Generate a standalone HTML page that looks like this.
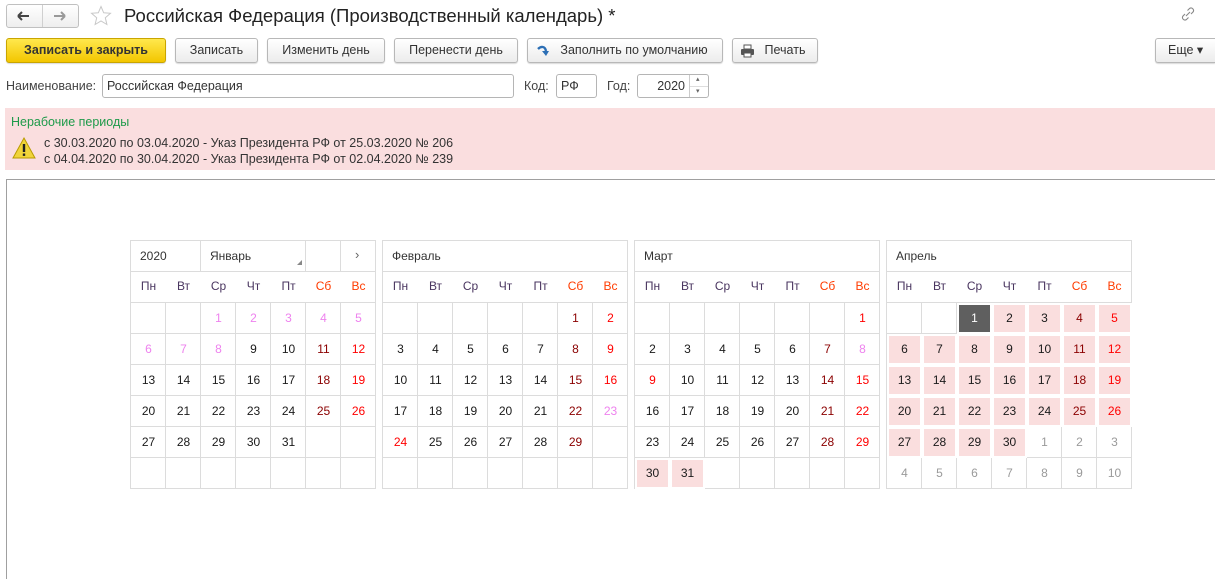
<!DOCTYPE html>
<html><head><meta charset="utf-8">
<style>
*{box-sizing:border-box;margin:0;padding:0}
body{width:1215px;height:544px;overflow:hidden;background:#fff;font-family:"Liberation Sans",Arial,sans-serif;font-size:12px;color:#333;position:relative}
.a{position:absolute}
.btn{position:absolute;top:38px;height:25px;border:1px solid #b8b8b8;border-radius:3px;background:linear-gradient(#fff,#ececec);font-size:12.5px;color:#333;text-align:center;line-height:23px;box-shadow:0 1px 1px rgba(0,0,0,.15)}
.inp{position:absolute;height:24px;border:1px solid #b5b5b5;border-radius:3px;background:#fff;line-height:22px;padding:0 4px;font-size:12.5px;color:#333}
.cal{position:absolute;top:240px;width:246px;height:249px;border:1px solid #dcdcdc}
.c{position:absolute;width:35px;height:31px;text-align:center;line-height:31px;font-size:12px}
</style></head><body>
<!-- nav -->
<div class="a" style="left:6px;top:4px;width:73px;height:24px;border:1px solid #c0c0c0;border-radius:3px;background:linear-gradient(#fff,#eee)"></div>
<div class="a" style="left:42px;top:5px;width:1px;height:22px;background:#d0d0d0"></div>
<svg class="a" style="left:14px;top:9px" width="60" height="14"><path d="M4 7h11M4 7l4-4M4 7l4 4" stroke="#444" stroke-width="2" fill="none"/><path d="M40 7h11M51 7l-4-4M51 7l-4 4" stroke="#999" stroke-width="2" fill="none"/></svg>
<svg class="a" style="left:90px;top:5px" width="22" height="22"><path d="M11 1.5l2.7 6.3 6.8.5-5.2 4.5 1.6 6.7L11 16l-5.9 3.5 1.6-6.7L1.5 8.3l6.8-.5z" fill="none" stroke="#c8c8c8" stroke-width="1"/></svg>
<div class="a" style="left:124px;top:5px;font-size:18.5px;color:#222">Российская Федерация (Производственный календарь) *</div>
<svg class="a" style="left:1180px;top:6px" width="16" height="16"><path d="M6 10l4-4M5 8l-2 2a2.5 2.5 0 003.5 3.5l2-2M11 8l2-2a2.5 2.5 0 00-3.5-3.5l-2 2" stroke="#888" stroke-width="1.1" fill="none"/></svg>
<!-- buttons -->
<div class="btn" style="left:6px;width:160px;background:linear-gradient(#ffe84d,#f3c600);border-color:#c9a500;color:#333;font-weight:bold">Записать и закрыть</div>
<div class="btn" style="left:175px;width:83px">Записать</div>
<div class="btn" style="left:267px;width:118px">Изменить день</div>
<div class="btn" style="left:394px;width:124px">Перенести день</div>
<div class="btn" style="left:527px;width:196px;padding-left:18px">Заполнить по умолчанию</div>
<svg class="a" style="left:536px;top:44px" width="14" height="13"><path d="M2 5c3-3 7-3 8 2" stroke="#2c6fb5" stroke-width="2.4" fill="none"/><path d="M6 7l7 0-3 5z" fill="#2c6fb5"/></svg>
<div class="btn" style="left:732px;width:86px;padding-left:20px">Печать</div>
<svg class="a" style="left:740px;top:44px" width="15" height="14"><rect x="4" y="1" width="7" height="4" fill="#fff" stroke="#555"/><rect x="1" y="5" width="13" height="6" rx="1" fill="#555"/><rect x="4" y="9" width="7" height="4" fill="#fff" stroke="#555"/></svg>
<div class="btn" style="left:1155px;width:60px;border-right:none;border-radius:3px 0 0 3px;text-align:left;padding-left:12px">Еще ▾</div>
<!-- fields -->
<div class="a" style="left:6px;top:79px;font-size:12.5px;color:#444">Наименование:</div>
<div class="inp" style="left:102px;top:74px;width:412px">Российская Федерация</div>
<div class="a" style="left:524px;top:79px;font-size:12.5px;color:#444">Код:</div>
<div class="inp" style="left:556px;top:74px;width:41px">РФ</div>
<div class="a" style="left:607px;top:79px;font-size:12.5px;color:#444">Год:</div>
<div class="inp" style="left:637px;top:74px;width:72px;text-align:right;padding-right:23px">2020</div>
<div class="a" style="left:689px;top:75px;width:1px;height:22px;background:#ccc"></div>
<div class="a" style="left:690px;top:86px;width:18px;height:1px;background:#ddd"></div>
<div class="a" style="left:696px;top:75px;font-size:7px;color:#666">▴</div>
<div class="a" style="left:696px;top:87px;font-size:7px;color:#666">▾</div>
<!-- warning -->
<div class="a" style="left:5px;top:108px;width:1210px;height:62px;background:#fadedf"></div>
<div class="a" style="left:11px;top:115px;font-size:12.5px;color:#1e9a4a">Нерабочие периоды</div>
<svg class="a" style="left:12px;top:136px" width="24" height="24"><path d="M12 2L23 22H1z" fill="#f0d43a" stroke="#b99b00" stroke-width="1"/><rect x="10.8" y="8" width="2.4" height="8" fill="#222"/><rect x="10.8" y="17.5" width="2.4" height="2.4" fill="#222"/></svg>
<div class="a" style="left:44px;top:135px;font-size:12.5px;color:#333;line-height:16px">с 30.03.2020 по 03.04.2020 - Указ Президента РФ от 25.03.2020 № 206<br>с 04.04.2020 по 30.04.2020 - Указ Президента РФ от 02.04.2020 № 239</div>
<!-- content frame -->
<div class="a" style="left:6px;top:179px;width:1215px;height:400px;border-left:1px solid #a0a0a0;border-top:1px solid #a0a0a0"></div>
<div id="cals"></div>
<script>
var W='#1a1a1a',SA='#8b0000',SU='#ff0000',PK='#ee82ee',GR='#9a9a9a',BG='#fadede';
function cal(x,name,start,n,special,bgFrom,bgTo,next){
 var h='<div class="cal" style="left:'+x+'px">';
 h+='<div class="a" style="left:0;top:30px;width:244px;height:1px;background:#dcdcdc"></div>';
 h+='<div class="a" style="left:0;top:61px;width:244px;height:1px;background:#dcdcdc"></div>';
 for(var r=1;r<6;r++)h+='<div class="a" style="left:0;top:'+(61+r*31)+'px;width:244px;height:1px;background:#dcdcdc"></div>';
 for(var c=1;c<7;c++)h+='<div class="a" style="left:'+(c*35-1)+'px;top:61px;width:1px;height:186px;background:#dcdcdc"></div>';
 if(name=='Январь'){
  h+='<div class="a" style="left:9px;top:8px;color:#333">2020</div>';
  [69,174,209].forEach(function(v){h+='<div class="a" style="left:'+v+'px;top:0;width:1px;height:30px;background:#dcdcdc"></div>'});
  h+='<div class="a" style="left:79px;top:8px;color:#333">Январь</div><div class="a" style="left:166px;top:19px;width:0;height:0;border-left:5px solid transparent;border-bottom:5px solid #888"></div><div class="a" style="left:224px;top:6px;color:#666;font-size:13px">›</div>';
 } else h+='<div class="a" style="left:9px;top:8px;color:#333">'+name+'</div>';
 var wd=['Пн','Вт','Ср','Чт','Пт','Сб','Вс'];
 for(var i=0;i<7;i++)h+='<div class="c" style="left:'+(i*35)+'px;top:30px;color:'+(i>4?'#ff3c00':'#4a3660')+'">'+wd[i]+'</div>';
 for(var d=1;d<=n+next;d++){
  var p=start+d-1,r=Math.floor(p/7),c=p%7,col=c==5?SA:c==6?SU:W,dd=d,bg='';
  if(d>n){dd=d-n;col=GR;}
  if(special[d])col=special[d];
  if(d>=bgFrom&&d<=bgTo)bg=BG;
  if(special.dark==d){bg='#5f5f5f';col='#fff';}
  h+='<div class="c" style="left:'+(c*35)+'px;top:'+(62+r*31)+'px;'+(bg?'background:'+bg+';border:2px solid #fff;line-height:27px;':'')+'color:'+col+'">'+dd+'</div>';
 }
 return h+'</div>';
}
var o='';
o+=cal(130,'Январь',2,31,{1:PK,2:PK,3:PK,4:PK,5:PK,6:PK,7:PK,8:PK},99,0,0);
o+=cal(382,'Февраль',5,29,{22:SA,23:PK,24:SU},99,0,0);
o+=cal(634,'Март',6,31,{8:PK,9:SU},30,31,0);
o+=cal(886,'Апрель',2,30,{dark:1},1,30,10);
document.getElementById('cals').innerHTML=o;
</script>
</body></html>
